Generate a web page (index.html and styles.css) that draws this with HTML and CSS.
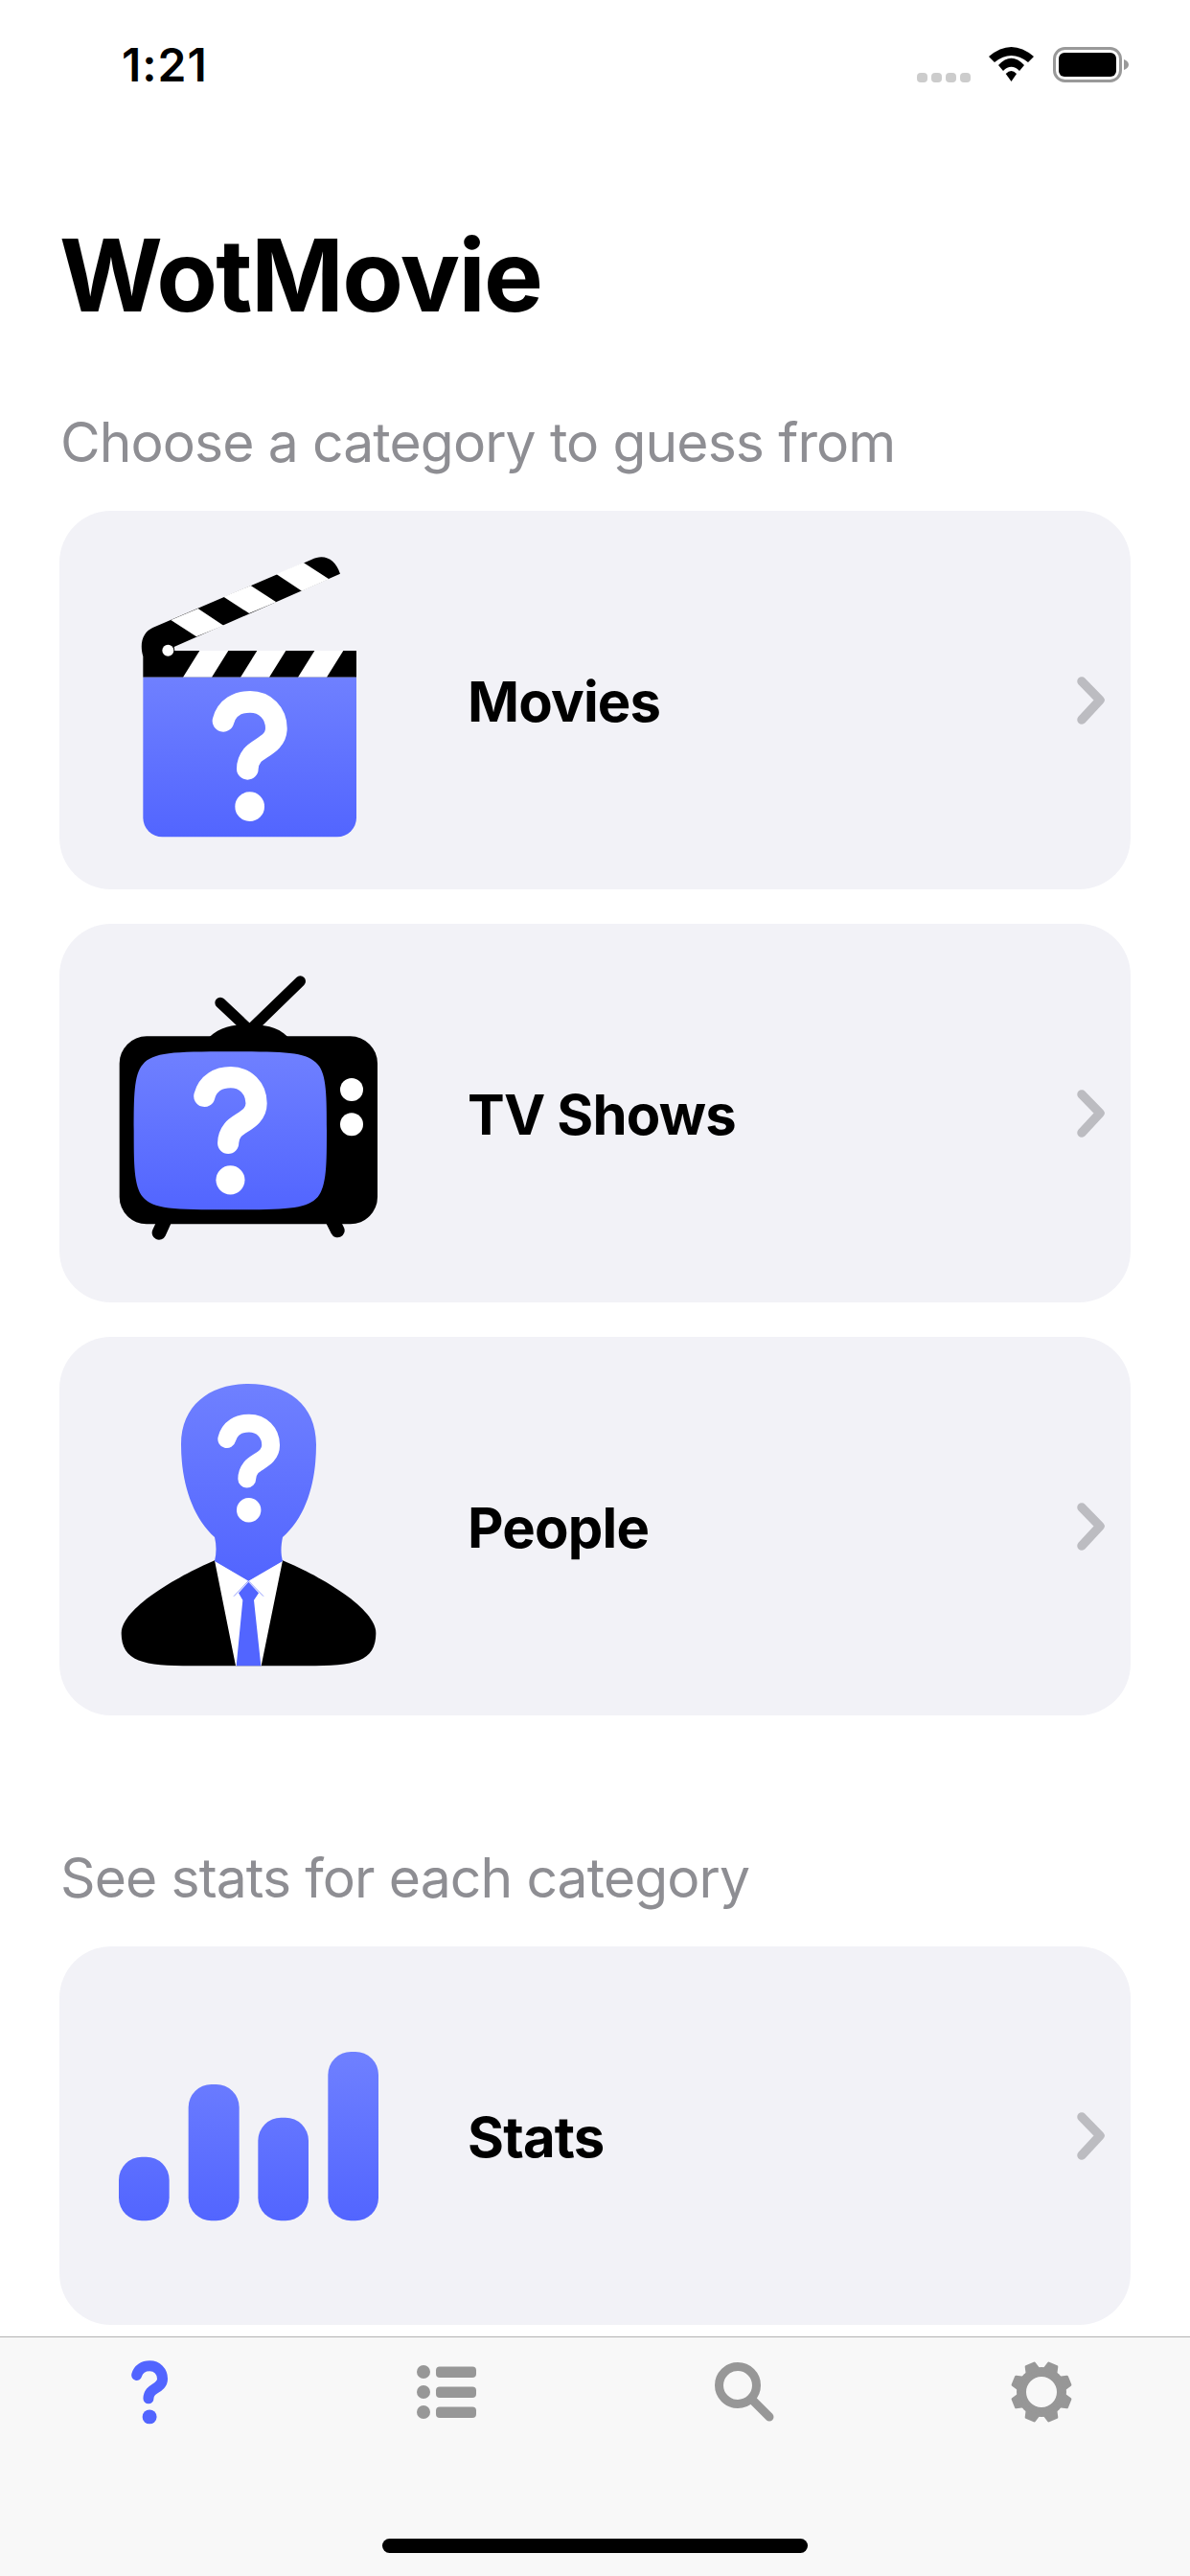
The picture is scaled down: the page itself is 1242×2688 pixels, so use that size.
FILE: index.html
```html
<!DOCTYPE html>
<html lang="en">
<head>
  <meta charset="UTF-8">
  <meta name="viewport" content="width=device-width, initial-scale=1.0">
  <title>WotMovie</title>
  <link rel="stylesheet" href="styles.css">
</head>
<body>
  <div class="screen">
    <div class="status-bar">
      <span class="time">1:21</span>
      <div class="status-icons">
        <div class="signal"><span></span><span></span><span></span><span></span></div>
        <svg class="wifi" width="47" height="36" viewBox="0 0 47 36" fill="#000">
          <path d="M0 10 Q23.500 -10 47 10 L41 16 Q23.500 2 6 16 Z"/>
          <path d="M10 19 Q23.500 4.400 37 19 L32 25 Q23.500 16.700 15 25 Z"/>
          <path d="M17.700 28 Q23.500 22 29 28 L23.500 36 Z"/>
        </svg>
        <svg class="battery" width="79" height="37" viewBox="0 0 79 37">
          <rect x="1.500" y="1.500" width="69" height="34" rx="11" fill="#fff" stroke="#999" stroke-width="3"/>
          <rect x="6" y="6" width="60" height="25" rx="6" fill="#000"/>
          <path d="M74 13 C77 14 79 16 79 18.500 C79 21 77 23 74 24 Z" fill="#999"/>
        </svg>
      </div>
    </div>

    <h1 class="title">WotMovie</h1>

    <p class="section-label">Choose a category to guess from</p>
    <div class="card-list">
      <div class="card">
        <!-- viewBox is in 1/3 px units, easier to trace -->
        <svg class="card-icon" viewBox="72 -81 816 1185">
          <defs>
            <linearGradient id="blue" x1="0" y1="0" x2="0" y2="1">
              <stop offset="0" stop-color="#6f80ff"/>
              <stop offset="1" stop-color="#5265ff"/>
            </linearGradient>
            <linearGradient id="bars" gradientUnits="userSpaceOnUse" x1="0" y1="93" x2="0" y2="622">
              <stop offset="0" stop-color="#6f80ff"/>
              <stop offset="1" stop-color="#5265ff"/>
            </linearGradient>
            <g id="qmark">
              <path d="M399 577 C410 535 445 517 483 517 C530 517 565 552 565 600 C565 650 510 660 490 685 C478 700 475 712 475 727" fill="none" stroke="#fff" stroke-width="68" stroke-linecap="round"/>
              <circle cx="482" cy="845" r="46" fill="#fff"/>
            </g>
          </defs>
          <path d="M148 375 C135 330 150 298 178 285 L675 72 C715 52 750 70 765 116 L245 345 L247 357 H816 V440 H148 Z" fill="#000"/>
          <polygon points="235,261 320,225 400,278 315,313" fill="#fff"/>
          <polygon points="400,188 485,153 565,205 480,240" fill="#fff"/>
          <polygon points="565,117 650,81 730,133 645,170" fill="#fff"/>
          <polygon points="325,357 415,357 363,440 273,440" fill="#fff"/>
          <polygon points="505,357 595,357 543,440 453,440" fill="#fff"/>
          <polygon points="685,357 775,357 723,440 633,440" fill="#fff"/>
          <circle cx="226" cy="356" r="18" fill="#fff"/>
          <path d="M148 440 H816 V880 A60 60 0 0 1 756 940 H208 A60 60 0 0 1 148 880 Z" fill="url(#blue)"/>
          <use href="#qmark"/>
        </svg>
        <span class="card-name">Movies</span>
        <svg class="chevron" width="32" height="56" viewBox="0 0 32 56"><path d="M5 8 L24 27.500 L5 48" fill="none" stroke="#bcbcc1" stroke-width="9.500" stroke-linecap="round" stroke-linejoin="round"/></svg>
      </div>

      <div class="card">
        <svg class="card-icon" viewBox="72 -105 816 1185">
          <line x1="390" y1="142" x2="478" y2="225" stroke="#000" stroke-width="34" stroke-linecap="round"/>
          <line x1="640" y1="75" x2="478" y2="232" stroke="#000" stroke-width="34" stroke-linecap="round"/>
          <line x1="198" y1="862" x2="215" y2="825" stroke="#000" stroke-width="44" stroke-linecap="round"/>
          <line x1="757" y1="855" x2="742" y2="825" stroke="#000" stroke-width="44" stroke-linecap="round"/>
          <path d="M355 250 C390 215 440 210 478 210 C520 210 570 215 602 250 Z" fill="#000"/>
          <rect x="74" y="247" width="808" height="588" rx="85" fill="#000"/>
          <path d="M421 295 C600 295 660 297 695 335 C723 365 723 440 723 542 C723 645 723 715 695 750 C660 788 600 790 421 790 C240 790 180 788 147 750 C119 715 119 645 119 542 C119 440 119 365 147 335 C180 297 240 295 421 295 Z" fill="url(#blue)"/>
          <circle cx="801" cy="414" r="36" fill="#fff"/>
          <circle cx="801" cy="523" r="36" fill="#fff"/>
          <use href="#qmark" transform="translate(-51 -131) scale(.98)"/>
        </svg>
        <span class="card-name">TV Shows</span>
        <svg class="chevron" width="32" height="56" viewBox="0 0 32 56"><path d="M5 8 L24 27.500 L5 48" fill="none" stroke="#bcbcc1" stroke-width="9.500" stroke-linecap="round" stroke-linejoin="round"/></svg>
      </div>

      <div class="card">
        <svg class="card-icon" viewBox="72 -72 816 1185">
          <path d="M372 628 C250 680 80 780 80 855 C80 945 150 958 300 958 H660 C810 958 877 945 877 855 C877 780 710 680 585 628 Z" fill="#000"/>
          <polygon points="372,628 478,690 585,628 518,958 438,958" fill="#fff"/>
          <path d="M478 75 C600 75 690 140 690 265 C690 380 660 490 585 555 C580 580 578 605 585 630 L478 692 L372 630 C378 605 378 580 372 555 C300 490 267 380 267 265 C267 140 360 75 478 75 Z" fill="url(#blue)"/>
          <path d="M432 740 L478 692 L525 740" fill="none" stroke="#5b6dff" stroke-width="2"/>
          <polygon points="478,695 510,730 495,752 517,958 440,958 460,752 447,730" fill="#5265ff"/>
          <use href="#qmark" transform="translate(79 -231) scale(.83)"/>
        </svg>
        <span class="card-name">People</span>
        <svg class="chevron" width="32" height="56" viewBox="0 0 32 56"><path d="M5 8 L24 27.500 L5 48" fill="none" stroke="#bcbcc1" stroke-width="9.500" stroke-linecap="round" stroke-linejoin="round"/></svg>
      </div>
    </div>

    <p class="section-label section-stats">See stats for each category</p>
    <div class="card-list">
      <div class="card">
        <svg class="card-icon" viewBox="72 -237 816 1185">
          <rect x="72" y="422" width="158" height="200" rx="72" fill="url(#bars)"/>
          <rect x="290" y="195" width="159" height="427" rx="72" fill="url(#bars)"/>
          <rect x="508" y="299" width="158" height="323" rx="72" fill="url(#bars)"/>
          <rect x="727" y="93" width="158" height="529" rx="72" fill="url(#bars)"/>
        </svg>
        <span class="card-name">Stats</span>
        <svg class="chevron" width="32" height="56" viewBox="0 0 32 56"><path d="M5 8 L24 27.500 L5 48" fill="none" stroke="#bcbcc1" stroke-width="9.500" stroke-linecap="round" stroke-linejoin="round"/></svg>
      </div>
    </div>

    <div class="tab-bar">
      <div class="tabs">
        <div class="tab">
          <svg width="70" height="70" viewBox="0 0 70 70">
            <g transform="translate(-42 -76) scale(.162)">
              <path d="M399 577 C410 535 445 517 483 517 C530 517 565 552 565 600 C565 650 510 660 490 685 C478 700 475 712 475 727" fill="none" stroke="#5265ff" stroke-width="68" stroke-linecap="round"/>
              <circle cx="482" cy="845" r="46" fill="#5265ff"/>
            </g>
          </svg>
        </div>
        <div class="tab">
          <svg width="70" height="70" viewBox="0 0 70 70" fill="#979797">
            <circle cx="11" cy="14" r="7"/><rect x="24" y="8.500" width="42" height="11.500" rx="4"/>
            <circle cx="11" cy="35" r="7"/><rect x="24" y="29.500" width="42" height="11.500" rx="4"/>
            <circle cx="11" cy="56" r="7"/><rect x="24" y="50.500" width="42" height="11.500" rx="4"/>
          </svg>
        </div>
        <div class="tab">
          <svg width="70" height="70" viewBox="0 0 70 70" fill="none" stroke="#979797" stroke-width="9">
            <circle cx="29" cy="28" r="19.500"/>
            <line x1="44" y1="43" x2="62" y2="61" stroke-linecap="round"/>
          </svg>
        </div>
        <div class="tab">
          <svg width="70" height="70" viewBox="-35 -35 70 70" fill="#979797" stroke="#979797">
            <circle r="21" fill="none" stroke-width="10"/>
            <g stroke-width="3" stroke-linejoin="round">
              <polygon points="-4.500,-30.500 4.500,-30.500 7,-21 -7,-21" transform="rotate(22.500)"/>
              <polygon points="-4.500,-30.500 4.500,-30.500 7,-21 -7,-21" transform="rotate(67.500)"/>
              <polygon points="-4.500,-30.500 4.500,-30.500 7,-21 -7,-21" transform="rotate(112.500)"/>
              <polygon points="-4.500,-30.500 4.500,-30.500 7,-21 -7,-21" transform="rotate(157.500)"/>
              <polygon points="-4.500,-30.500 4.500,-30.500 7,-21 -7,-21" transform="rotate(202.500)"/>
              <polygon points="-4.500,-30.500 4.500,-30.500 7,-21 -7,-21" transform="rotate(247.500)"/>
              <polygon points="-4.500,-30.500 4.500,-30.500 7,-21 -7,-21" transform="rotate(292.500)"/>
              <polygon points="-4.500,-30.500 4.500,-30.500 7,-21 -7,-21" transform="rotate(337.500)"/>
            </g>
          </svg>
        </div>
      </div>
      <div class="home-bar"></div>
    </div>
  </div>
</body>
</html>
```

FILE: styles.css
```css
* {
  box-sizing: border-box;
}
body {
  margin: 0;
  background-color: #fff;
  font-family: Inter, "Liberation Sans", sans-serif;
  color: #000;
}
.screen {
  width: 1242px;
  height: 2688px;
  display: flex;
  flex-direction: column;
  overflow: hidden;
}
.status-bar {
  height: 132px;
  padding: 44px 64px 0 127px;
  display: flex;
  justify-content: space-between;
  align-items: flex-start;
}
.time {
  font-size: 48px;
  font-weight: 600;
  line-height: 47px;
  letter-spacing: 1px;
}
.status-icons {
  display: flex;
  align-items: flex-end;
  padding-top: 5px;
}
.signal {
  display: flex;
  gap: 4px;
  margin-right: 19px;
}
.signal span {
  width: 11px;
  height: 10px;
  border-radius: 4px;
  background-color: #ccc;
}
.wifi {
  margin-right: 20px;
  margin-bottom: 1px;
}
.title {
  margin: 103px 0 0 62px;
  font-size: 104px;
  line-height: 104px;
  font-weight: 700;
  letter-spacing: -1.6px;
}
.section-label {
  margin: 87px 0 0 63px;
  font-size: 57px;
  line-height: 72px;
  letter-spacing: -0.9px;
  color: #8e8e93;
}
.section-stats {
  margin-top: 134px;
}
.card-list {
  margin: 35px 62px 0;
  display: flex;
  flex-direction: column;
  gap: 36px;
}
.card {
  height: 395px;
  padding: 0 24px 0 62px;
  display: flex;
  align-items: center;
  background-color: #f2f2f7;
  border-radius: 54px;
}
.card-icon {
  width: 272px;
  height: 395px;
  flex-shrink: 0;
}
.card-name {
  margin: 2px 0 0 92px;
  font-size: 58px;
  font-weight: 700;
  letter-spacing: -0.8px;
  flex: 1;
}
.chevron {
  flex-shrink: 0;
}
.tab-bar {
  margin-top: auto;
  height: 250px;
  background-color: #f8f8f8;
  border-top: 1px solid #b2b2b2;
}
.tabs {
  display: grid;
  grid-template-columns: repeat(4, 1fr);
  padding-top: 22px;
}
.tab {
  display: flex;
  justify-content: center;
}
.home-bar {
  width: 444px;
  height: 15px;
  margin: 118px auto 0;
  background-color: #000;
  border-radius: 8px;
}
```
